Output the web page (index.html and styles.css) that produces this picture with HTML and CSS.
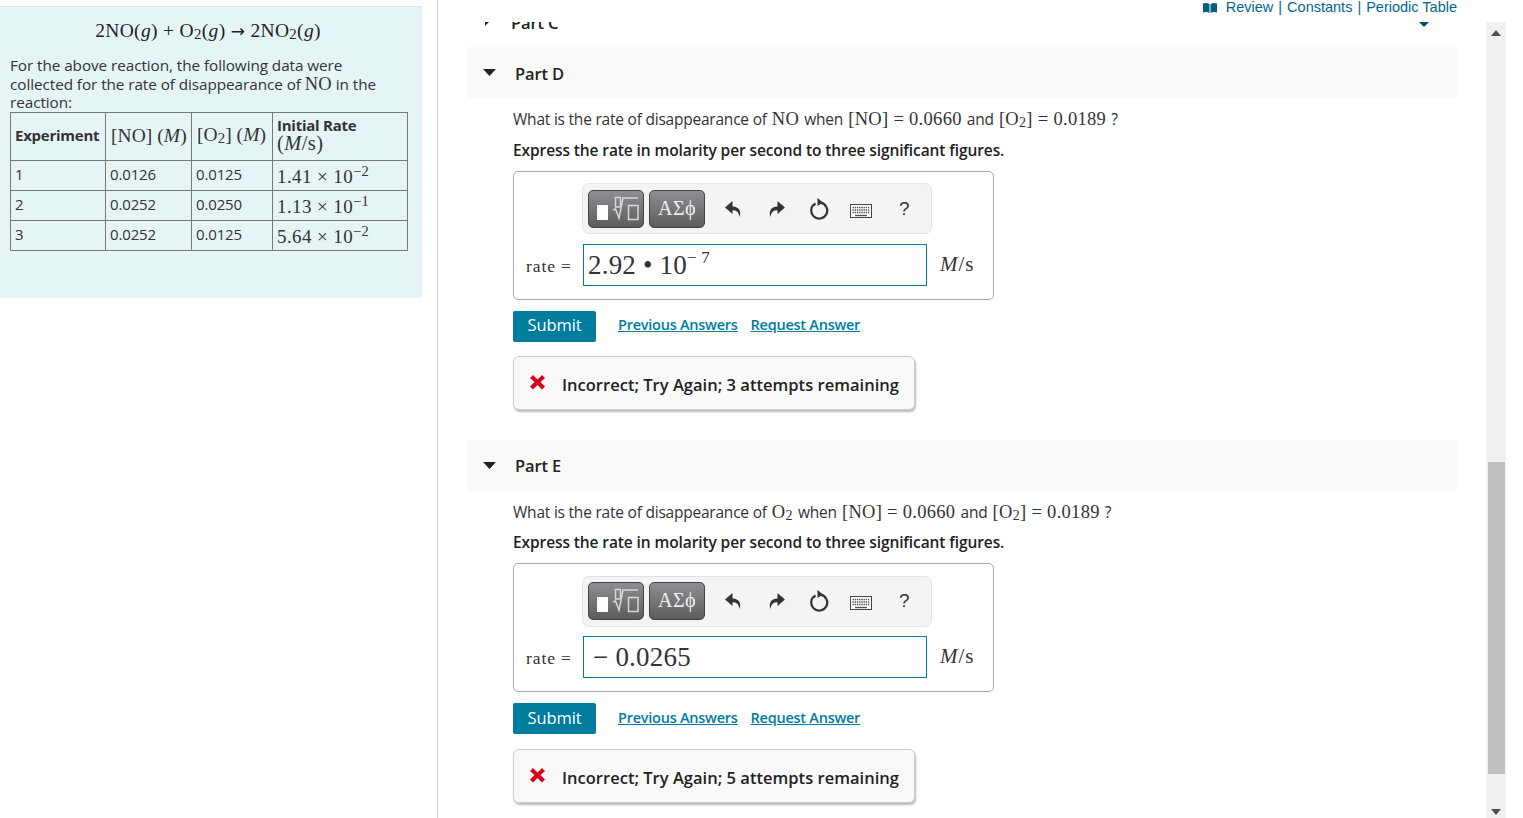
FILE: index.html
```html
<!DOCTYPE html>
<html lang="en">
<head>
<meta charset="utf-8">
<title>Part D and E</title>
<link rel="stylesheet" href="styles.css">
</head>
<body>
<aside class="left">
  <div class="panel">
    <p class="eq m">2NO(<i>g</i>) + O<sub>2</sub>(<i>g</i>) <span class="arr">→</span> 2NO<sub>2</sub>(<i>g</i>)</p>
    <p class="intro">For the above reaction, the following data were collected for the rate of disappearance of <span class="m big">NO</span> in the reaction:</p>
    <table class="data">
      <colgroup><col class="c1"><col class="c2"><col class="c3"><col class="c4"></colgroup>
      <tr class="head">
        <th>Experiment</th>
        <th class="m">[NO] (<i>M</i>)</th>
        <th class="m">[O<sub>2</sub>] (<i>M</i>)</th>
        <th>Initial Rate<br><span class="m"><span class="paren">(<i>M</i>/s)</span></span></th>
      </tr>
      <tr><td>1</td><td>0.0126</td><td>0.0125</td><td class="m">1.41 × 10<sup>−2</sup></td></tr>
      <tr><td>2</td><td>0.0252</td><td>0.0250</td><td class="m">1.13 × 10<sup>−1</sup></td></tr>
      <tr><td>3</td><td>0.0252</td><td>0.0125</td><td class="m">5.64 × 10<sup>−2</sup></td></tr>
    </table>
  </div>
</aside>
<main class="main">
  <header class="top">
    <svg class="book" width="14" height="10" viewBox="0 0 14 10"><path d="M0 .5Q3.500-.5 6.500 1v9Q3.500 8.500 0 9.500zM14 .5Q10.500-.5 7.500 1v9q3-1.500 6.500-.5z" fill="#00607f"/></svg>
    <a>Review</a><span class="sep">|</span><a>Constants</a><span class="sep">|</span><a>Periodic Table</a>
  </header>
  <svg class="caret" width="10" height="5" viewBox="0 0 10 5"><path d="M0 0h10L5 5z" fill="#00506e"/></svg>
  <div class="body">
    <div class="scroll">
      <div class="part part-c">
        <svg class="tri" width="14" height="14" viewBox="0 0 14 14"><path d="M2 0l6 6-6 6z" fill="#222"/></svg>
        <h2>Part C</h2>
      </div>

      <section>
        <div class="part">
          <svg class="tri" width="14" height="8" viewBox="0 0 14 8"><path d="M0 0h13L6.500 7z" fill="#222"/></svg>
          <h2>Part D</h2>
        </div>
        <div class="q">
          <p class="ask">What is the rate of disappearance of <span class="m big">NO</span> when <span class="m big">[NO] = 0.0660</span> and <span class="m big">[O<sub>2</sub>] = 0.0189</span> ?</p>
          <p class="express">Express the rate in molarity per second to three significant figures.</p>
          <div class="answer">
            <div class="toolbar">
              <button class="tb"><svg width="56" height="38" viewBox="0 0 56 38"><rect x="9" y="15" width="11" height="15" fill="#fff"/><g fill="none" stroke="#d8d8d8" stroke-width="1.500"><rect x="27.500" y="7.500" width="5" height="9.500"/><path d="M25 20l2.500-1 3.500 9 4-20h15"/><rect x="40.500" y="15.500" width="9.500" height="14"/></g></svg></button>
              <button class="tb tb-text">ΑΣϕ</button>
              <div class="icons">
                <svg width="18" height="18" viewBox="0 0 18 18"><path d="M7.500 1L0 7.500 7.500 14v-3.800c3.800 0 6 1.300 7.200 6.800 1.500-5.500-.2-10.300-7.200-10.400z" fill="#333"/></svg>
                <svg width="18" height="18" viewBox="0 0 18 18"><path d="M10.500 1L18 7.500 10.500 14v-3.800c-3.800 0-6 1.300-7.200 6.800-1.500-5.500.2-10.300 7.200-10.400z" fill="#333"/></svg>
                <svg width="20" height="22" viewBox="0 0 20 22"><path d="M6.500 5.500a8 8 0 1 0 5-.8" fill="none" stroke="#333" stroke-width="2.200"/><path d="M8.500 0l5.500 4.500-5.500 3.500z" fill="#333"/></svg>
                <svg width="22" height="14" viewBox="0 0 22 14"><rect x=".5" y=".5" width="21" height="13" fill="#fff" stroke="#444"/><path d="M2.500 3.500h17M2.500 6h17M2.500 8.500h17" stroke="#555" stroke-width="1.400" stroke-dasharray="1.400 .8"/><path d="M5 11.500h12" stroke="#555" stroke-width="1.400"/></svg>
                <span class="help">?</span>
              </div>
            </div>
            <div class="entry">
              <span class="lbl m">rate =</span>
              <div class="field m">2.92 • 10<sup>− 7</sup></div>
              <span class="unit m"><i>M</i>/s</span>
            </div>
          </div>
          <div class="actions">
            <button class="submit">Submit</button>
            <a class="lnk">Previous Answers</a>
            <a class="lnk">Request Answer</a>
          </div>
          <div class="fb">
            <svg width="17" height="16" viewBox="0 0 17 16"><path d="M1 4l3-3 4.500 4.500L13 1l3 3-4.500 4 4.500 4.500-3 3L8.500 11 4 15.500l-3-3L5.500 8z" fill="#d9001b"/></svg>
            <span>Incorrect; Try Again; 3 attempts remaining</span>
          </div>
        </div>
      </section>

      <section class="sec-e">
        <div class="part">
          <svg class="tri" width="14" height="8" viewBox="0 0 14 8"><path d="M0 0h13L6.500 7z" fill="#222"/></svg>
          <h2>Part E</h2>
        </div>
        <div class="q q-e">
          <p class="ask">What is the rate of disappearance of <span class="m big">O<sub>2</sub></span> when <span class="m big">[NO] = 0.0660</span> and <span class="m big">[O<sub>2</sub>] = 0.0189</span> ?</p>
          <p class="express">Express the rate in molarity per second to three significant figures.</p>
          <div class="answer">
            <div class="toolbar">
              <button class="tb"><svg width="56" height="38" viewBox="0 0 56 38"><rect x="9" y="15" width="11" height="15" fill="#fff"/><g fill="none" stroke="#d8d8d8" stroke-width="1.500"><rect x="27.500" y="7.500" width="5" height="9.500"/><path d="M25 20l2.500-1 3.500 9 4-20h15"/><rect x="40.500" y="15.500" width="9.500" height="14"/></g></svg></button>
              <button class="tb tb-text">ΑΣϕ</button>
              <div class="icons">
                <svg width="18" height="18" viewBox="0 0 18 18"><path d="M7.500 1L0 7.500 7.500 14v-3.800c3.800 0 6 1.300 7.200 6.800 1.500-5.500-.2-10.300-7.200-10.400z" fill="#333"/></svg>
                <svg width="18" height="18" viewBox="0 0 18 18"><path d="M10.500 1L18 7.500 10.500 14v-3.800c-3.800 0-6 1.300-7.200 6.800-1.500-5.500.2-10.300 7.200-10.400z" fill="#333"/></svg>
                <svg width="20" height="22" viewBox="0 0 20 22"><path d="M6.500 5.500a8 8 0 1 0 5-.8" fill="none" stroke="#333" stroke-width="2.200"/><path d="M8.500 0l5.500 4.500-5.500 3.500z" fill="#333"/></svg>
                <svg width="22" height="14" viewBox="0 0 22 14"><rect x=".5" y=".5" width="21" height="13" fill="#fff" stroke="#444"/><path d="M2.500 3.500h17M2.500 6h17M2.500 8.500h17" stroke="#555" stroke-width="1.400" stroke-dasharray="1.400 .8"/><path d="M5 11.500h12" stroke="#555" stroke-width="1.400"/></svg>
                <span class="help">?</span>
              </div>
            </div>
            <div class="entry">
              <span class="lbl m">rate =</span>
              <div class="field field-neg m">− 0.0265</div>
              <span class="unit m"><i>M</i>/s</span>
            </div>
          </div>
          <div class="actions">
            <button class="submit">Submit</button>
            <a class="lnk">Previous Answers</a>
            <a class="lnk">Request Answer</a>
          </div>
          <div class="fb">
            <svg width="17" height="16" viewBox="0 0 17 16"><path d="M1 4l3-3 4.500 4.500L13 1l3 3-4.500 4 4.500 4.500-3 3L8.500 11 4 15.500l-3-3L5.500 8z" fill="#d9001b"/></svg>
            <span>Incorrect; Try Again; 5 attempts remaining</span>
          </div>
        </div>
      </section>
    </div>
    <div class="sbar">
      <svg class="arrow" width="10" height="6" viewBox="0 0 10 6"><path d="M0 6h10L5 0z" fill="#505050"/></svg>
      <div class="thumb"></div>
      <svg class="arrow" width="10" height="6" viewBox="0 0 10 6"><path d="M0 0h10L5 6z" fill="#505050"/></svg>
    </div>
  </div>
</main>
</body>
</html>
```

FILE: styles.css
```css
* { box-sizing: border-box; }
html, body { margin: 0; height: 818px; overflow: hidden; background: #fff; }
body {
  display: flex;
  font-family: "Open Sans", "Noto Sans", sans-serif;
  color: #333;
  font-size: 15px;
}
p, h2 { margin: 0; }
.m { font-family: "Liberation Serif", "DejaVu Serif", serif; }
sub { font-size: 76%; vertical-align: baseline; position: relative; top: .16em; }
sup { font-size: 76%; vertical-align: baseline; position: relative; top: -.5em; }

.left { width: 438px; flex: none; border-right: 1px solid #c8ced8; padding-top: 6px; }
.panel {
  width: 422px; height: 292px;
  background: #e5f5f6;
  border-top: 1px solid #dde3e8;
  padding: 0 0 0 10px;
}
.eq { font-size: 19.500px; text-align: center; padding-right: 16px; padding-top: 12px; height: 49px; line-height: 24px; color: #222; letter-spacing: .33px; white-space: nowrap; }
.arr { font-family: "DejaVu Sans", sans-serif; font-size: 17px; }
.intro { width: 378px; font-size: 15.300px; line-height: 18.500px; letter-spacing: -.07px; height: 56px; color: #333; }
.intro .big { font-size: 18.500px; letter-spacing: .2px; }
.data { border-collapse: collapse; width: 397px; table-layout: fixed; border: 1px solid #222; color: #333; }
.c1 { width: 95px; } .c2 { width: 86px; } .c3 { width: 81px; } .c4 { width: 135px; }
.data th, .data td { border: 1px solid #777; padding: 0 4px 4px; text-align: left; font-size: 15px; line-height: 18px; font-weight: 400; height: 30px; letter-spacing: -.15px; white-space: nowrap; }
.data .head th { height: 48px; font-weight: 700; font-size: 15px; letter-spacing: -.25px; padding-bottom: 3px; }
.data .head th.m { font-weight: 400; font-size: 19.500px; letter-spacing: .05px; padding: 0 5px 2px; }
.data .paren { font-size: 20.500px; font-weight: 400; letter-spacing: .4px; }
.data td.m { font-size: 19px; letter-spacing: .4px; padding: 4px 4px 0; }

.main { flex: 1; display: flex; flex-direction: column; position: relative; min-width: 0; }
.top { height: 22px; flex: none; display: flex; align-items: flex-start; justify-content: flex-end; padding-right: 66px; font-family: "Liberation Sans", Arial, sans-serif; font-size: 14.500px; line-height: 15px; color: #00688a; }
.top a { color: #00688a; }
.sep { margin: 0 5px; color: #00688a; }
.book { margin: 3px 9px 0 0; }
.caret { position: absolute; left: 981px; top: 22px; z-index: 2; }

.body { flex: 1; display: flex; min-height: 0; }
.scroll { width: 1019px; flex: none; overflow: hidden; padding-left: 29px; }
.part { height: 51px; display: flex; align-items: center; background: #f9f9f9; padding-left: 16px; color: #222; }
.part-c { background: #fff; margin-top: -26px; }
.part h2 { font-size: 16.500px; font-weight: 600; margin-left: 18px; letter-spacing: -.15px; padding-top: 2px; }
.part-c h2 { transform: translateX(-4px); }
.sec-e .part h2 { padding-top: 0; }
.tri { flex: none; }
.part-c .tri { margin-top: -2px; }

.q { padding-left: 46px; }
.ask { font-size: 15.500px; line-height: 21px; letter-spacing: -.22px; padding-top: 11px; height: 37px; color: #333; white-space: nowrap; }
.ask .big { font-size: 18.500px; letter-spacing: .3px; margin: 0 1.300px; }
.express { font-size: 15.500px; font-weight: 600; line-height: 20px; letter-spacing: -.1px; margin-top: 5px; height: 31px; color: #222; white-space: nowrap; }
.q-e .ask { height: 36px; }

.answer { width: 481px; height: 129px; border: 1px solid #aaa; border-radius: 5px; padding: 11px 0 0 68px; }
.q-e .answer { padding-top: 12px; }
.toolbar { width: 350px; height: 51px; background: #f4f4f4; border: 1px solid #e4e4e4; border-radius: 7px; display: flex; align-items: center; padding-left: 5px; gap: 5px; }
.q-e .toolbar { padding-bottom: 2px; }
.tb { width: 56px; height: 38px; padding: 0; border: 1px solid #444; border-radius: 5px; background: linear-gradient(#8f8e93, #5d5d5d); display: block; }
.tb svg { display: block; margin: -1px; }
.tb-text { font-family: "Liberation Serif", serif; font-size: 20px; color: #eee; line-height: 34px; letter-spacing: .4px; padding-bottom: 2px; }
.icons { display: flex; align-items: center; }
.icons > * { flex: none; }
.icons svg:nth-child(1) { margin-left: 15px; }
.icons svg:nth-child(2) { margin-left: 24px; }
.icons svg:nth-child(3) { margin-left: 24px; }
.icons svg:nth-child(4) { margin-left: 21px; margin-top: 5px; }
.help { margin-left: 27px; font-family: "Liberation Sans", sans-serif; font-size: 19px; color: #333; }

.entry { display: flex; align-items: center; margin: 10px 0 0 -56px; }
.q-e .entry { margin-top: 9px; }
.lbl { width: 57px; padding-top: 2px; font-size: 17.500px; letter-spacing: .9px; color: #333; white-space: nowrap; }
.field { width: 344px; height: 42px; border: 1px solid #007c9d; padding: 0 0 0 4px; font-size: 27px; line-height: 40px; letter-spacing: .2px; color: #333; }
.field-neg { padding-left: 9px; }
.field sup { font-size: 17px; top: -11px; margin-left: 0; }
.unit { margin: -2px 0 0 13px; font-size: 21px; color: #333; letter-spacing: 1px; }

.actions { display: flex; align-items: center; margin-top: 11px; height: 31px; }
.submit { width: 83px; height: 31px; border: 0; border-radius: 2px; background: #007c9f; color: #fff; font-family: inherit; font-size: 16.500px; padding: 0 0 4px; letter-spacing: -.1px; }
.lnk { font-size: 14.500px; font-weight: 600; color: #007c9f; text-decoration: underline; letter-spacing: -.25px; margin-left: 22px; margin-top: -5px; }
.lnk + .lnk { margin-left: 13px; }
.q-e .lnk { margin-top: -3px; }
.q-e .submit { padding-bottom: 3px; }

.fb { display: flex; align-items: center; width: 402px; height: 54px; margin-top: 14px; border: 1px solid #ccc; border-radius: 6px; background: #f9f9f9; box-shadow: 1px 2px 2px #bbb; padding-left: 15px; color: #222; }
.fb svg { margin-top: -3px; flex: none; }
.fb span { margin-left: 16px; font-size: 16.500px; font-weight: 600; letter-spacing: .02px; white-space: nowrap; padding-top: 2px; }
.sec-e { margin-top: 30px; }
.q-e .fb { margin-top: 15px; }

.sbar { width: 20px; flex: none; margin-left: 29px; background: #f0f0f0; display: flex; flex-direction: column; align-items: center; }
.arrow { flex: none; margin-top: 8px; }
.thumb { width: 17px; height: 312px; background: #c0c0c0; margin-top: 426px; margin-left: 1px; flex: none; }
.thumb + .arrow { margin-top: 35px; }
```
